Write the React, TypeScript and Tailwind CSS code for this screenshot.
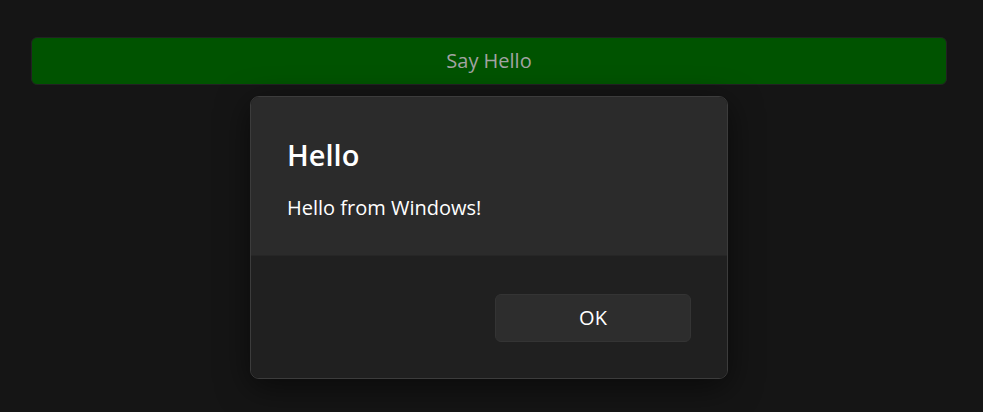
import React from "react";

export default function App() {
  return (
    <div
      className="relative h-[412px] w-[983px] overflow-hidden bg-[#151515]"
      style={{ fontFamily: '"Open Sans", "Noto Sans", sans-serif' }}
    >
      <div className="pl-[31px] pt-[37px]">
        <button className="flex h-[48px] w-[916px] items-center justify-center rounded-[6px] border border-[#222222] bg-[#005300] text-[20px] text-[#a3a3a3]">
          Say Hello
        </button>
      </div>

      <div className="absolute left-[250px] top-[96px] flex h-[283px] w-[478px] flex-col overflow-hidden rounded-[9px] border border-[#3c3c3c] shadow-[0_8px_32px_rgba(0,0,0,0.55)]">
        <div className="flex h-[158px] flex-col bg-[#2b2b2b] pl-[36px] pt-[38px]">
          <div className="text-[29px] font-semibold leading-[40px] text-white">Hello</div>
          <div className="mt-[19px] text-[20px] leading-[28px] text-white">Hello from Windows!</div>
        </div>
        <div className="flex flex-1 items-start justify-end border-t border-[#262626] bg-[#202020] pr-[36px] pt-[38px]">
          <button className="flex h-[48px] w-[196px] items-center justify-center rounded-[6px] border border-[#343434] bg-[#2d2d2d] text-[20px] text-white">
            OK
          </button>
        </div>
      </div>
    </div>
  );
}
